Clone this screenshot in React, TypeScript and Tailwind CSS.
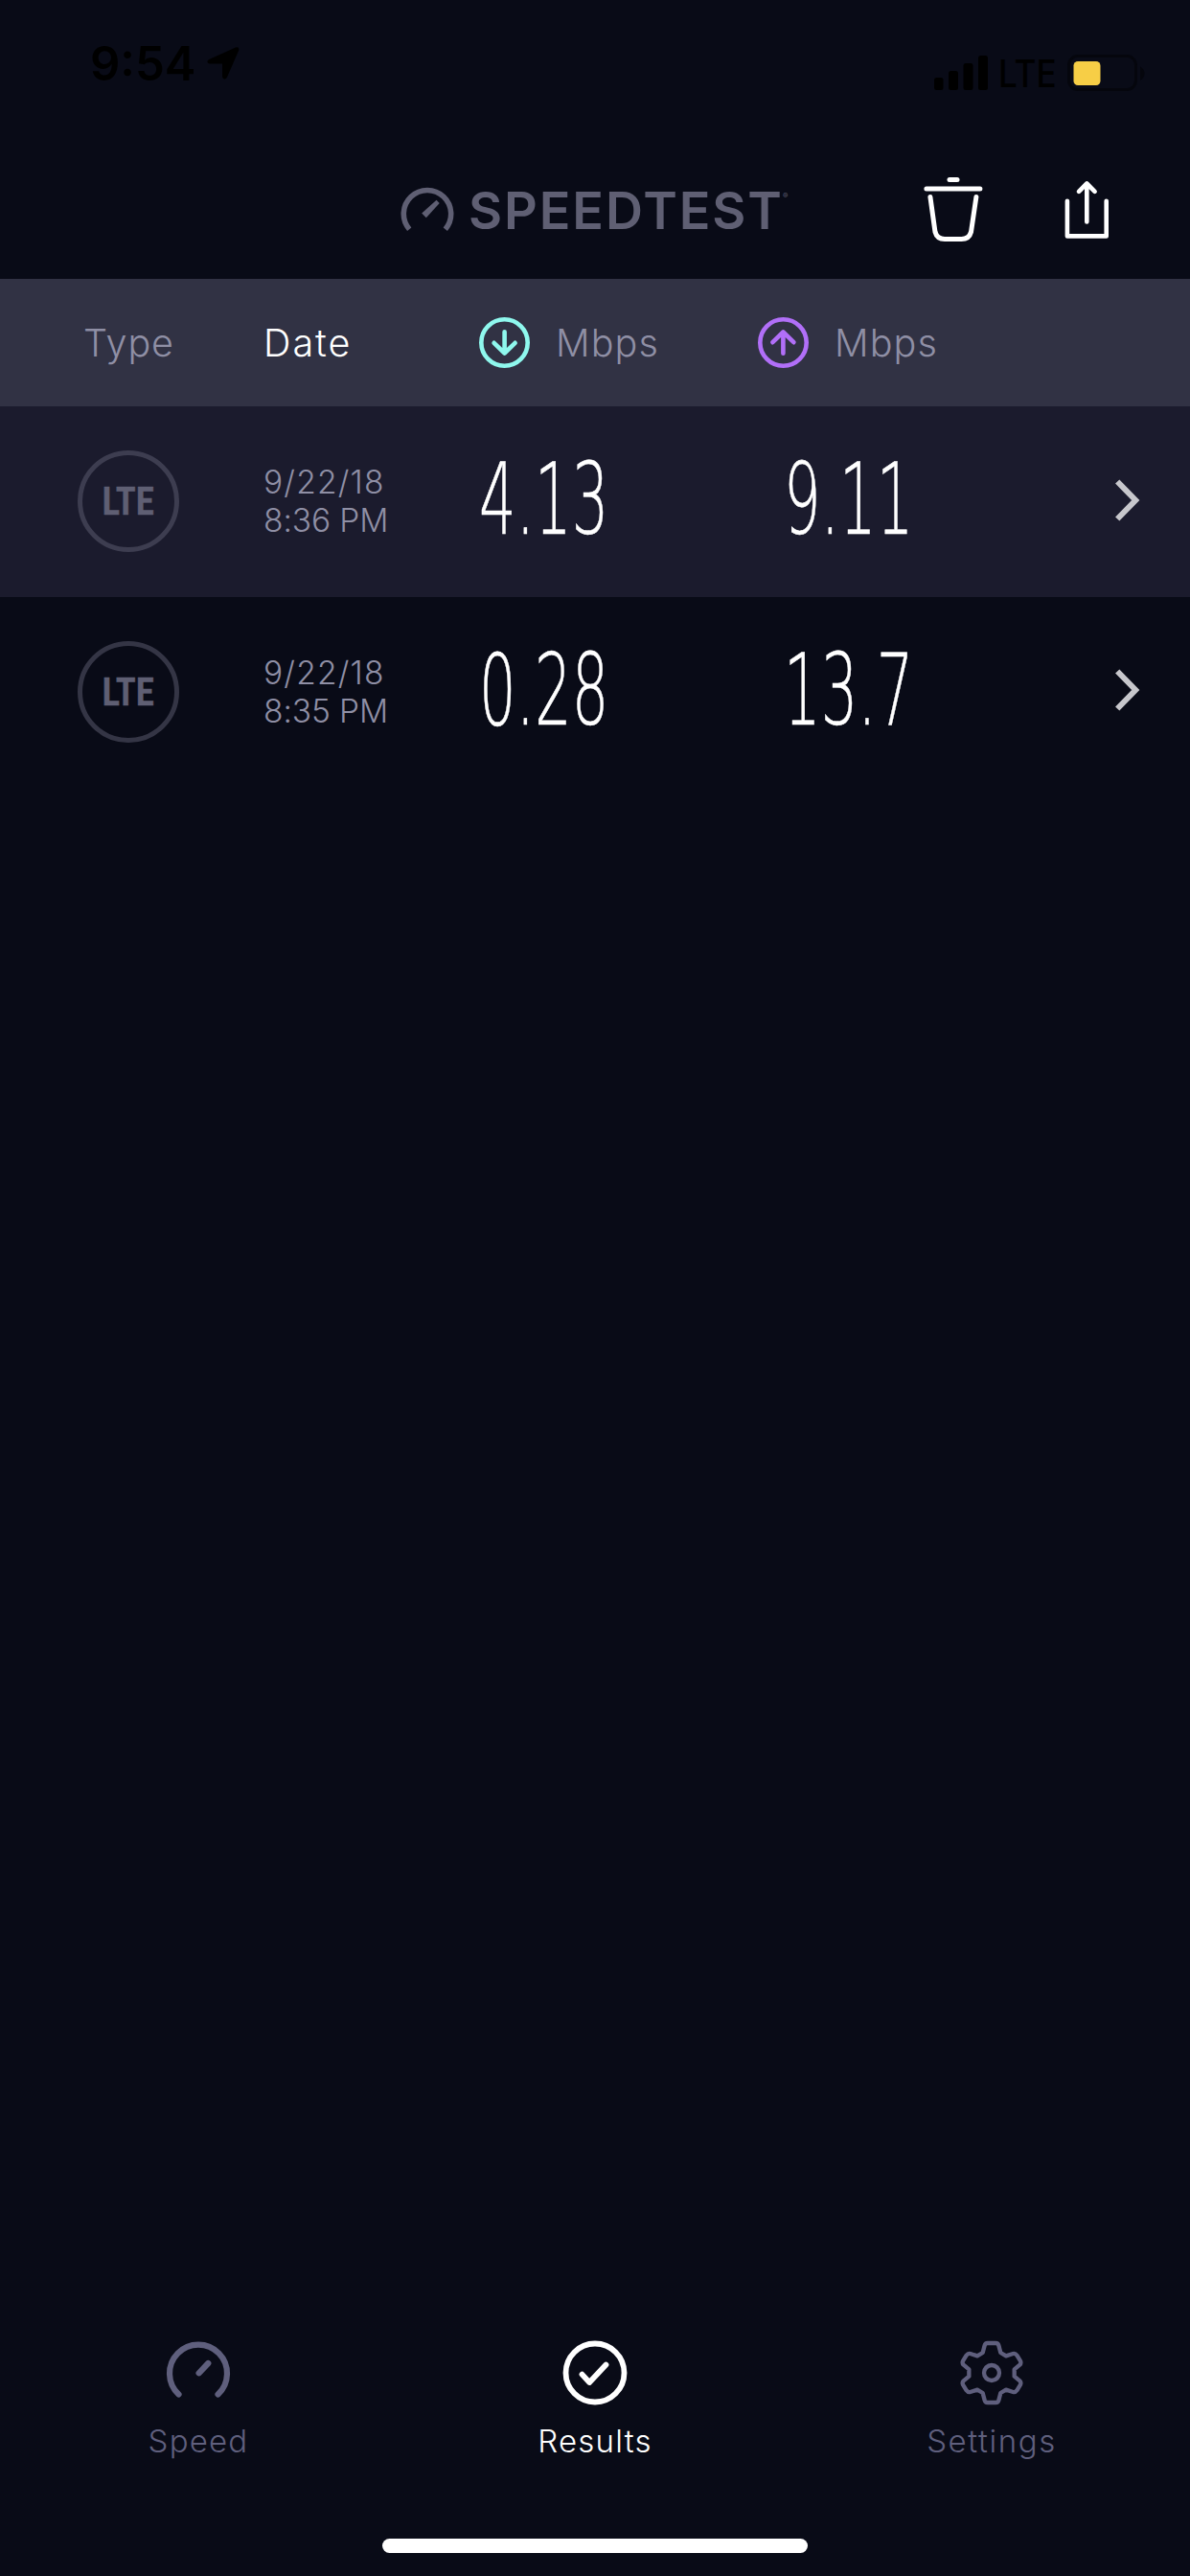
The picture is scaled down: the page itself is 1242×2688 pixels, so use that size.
import React from "react";

type Result = { date: string; time: string; down: string; up: string };

const results: Result[] = [
  { date: "9/22/18", time: "8:36 PM", down: "4.13", up: "9.11" },
  { date: "9/22/18", time: "8:35 PM", down: "0.28", up: "13.7" },
];

function StatusBar() {
  return (
    <div className="flex h-[132px] justify-between pt-[42px] pr-[46px] pl-[94px] text-black">
      <div className="flex h-[48px] items-center">
        <span className="pt-[2px] text-[49px] leading-[48px] font-semibold">9:54</span>
        <svg className="ml-[12px]" width="34" height="34" viewBox="0 0 34 34" fill="currentColor">
          <path d="M30 .6Q34-.6 33.200 3.600L21 31.500Q19.600 34 17.500 33.200 16 32.500 16 30.500V17.500H3Q.8 17.300.5 15.800.2 14 2.200 13Z" />
        </svg>
      </div>
      <div className="flex h-[68px] items-center">
        <svg width="58" height="36" viewBox="0 0 58 36" fill="currentColor">
          <rect x="0" y="23" width="9.500" height="13" rx="2.500" />
          <rect x="15" y="16" width="10" height="20" rx="2.500" />
          <rect x="30.500" y="8" width="10" height="28" rx="2.500" />
          <rect x="46" y="0" width="10" height="36" rx="2.500" />
        </svg>
        <span className="ml-[9px] w-[65px] origin-left scale-x-[.9] pt-[2px] text-[39px] leading-[64px] font-medium">LTE</span>
        <svg className="ml-[7px]" width="82" height="38" viewBox="0 0 82 38">
          <rect x="1.500" y="1.500" width="70" height="35" rx="9.500" fill="none" stroke="#05060d" strokeWidth="3" />
          <path d="M76 12.500Q80.500 15 80.500 19.500T76 27Z" fill="#05060d" />
          <rect x="6.500" y="7" width="28" height="25" rx="4.500" fill="#f7ce46" />
        </svg>
      </div>
    </div>
  );
}

function LogoGauge() {
  return (
    <svg width="56" height="48" viewBox="0 0 56 48">
      <path d="M9.200 45.200A24.700 24.700 0 1 1 46.800 45.200" fill="none" stroke="#5f5f73" strokeWidth="5.600" />
      <path d="M22.200 28.500L37.500 14.800 40.700 18 26.800 33.200Z" fill="#5f5f73" />
    </svg>
  );
}

function TitleBar() {
  return (
    <div className="flex h-[159px] items-start">
      <div className="mt-[62px] ml-[418px] flex h-[48px] items-center text-[#5f5f73]">
        <LogoGauge />
        <span className="ml-[15px] pt-[4px] text-[54px] leading-[48px] font-semibold tracking-[1.9px]">SPEEDTEST</span>
        <span className="-mt-[28px] -ml-[1px] text-[8px] leading-none">®</span>
      </div>
      <button className="mt-[53px] ml-auto" aria-label="Delete results">
        <svg width="62" height="68" viewBox="0 0 62 68" fill="none" stroke="#fff" strokeWidth="5" strokeLinecap="round">
          <path d="M27 2.600H35" />
          <path d="M2.900 12H58.900" />
          <path d="M6.900 20.500L12 57Q14 64.500 22 64.500H39.500Q47.500 64.500 49.500 57L54.900 20.500" />
        </svg>
      </button>
      <button className="mt-[56px] mr-[84px] ml-[82px]" aria-label="Share results">
        <svg width="50" height="62" viewBox="0 0 50 62" fill="none" stroke="#fff" strokeWidth="4.600" strokeLinecap="round" strokeLinejoin="round">
          <path d="M5.900 21.700V58.400H46.700V21.700" />
          <path d="M26.300 43.500V4M18 11.800L26.300 3.500 34.600 11.800" />
        </svg>
      </button>
    </div>
  );
}

function DirectionIcon({ up = false }: { up?: boolean }) {
  return (
    <svg className={up ? "rotate-180 text-[#b16ff8]" : "text-[#8ff8ee]"} width="53" height="53" viewBox="0 0 53 53" fill="none" stroke="currentColor" strokeWidth="4.600" strokeLinecap="round" strokeLinejoin="round">
      <circle cx="26.500" cy="26.500" r="24.200" />
      <path d="M26.600 15.300V37.500M15.600 26.800L26.600 37.500 37.600 26.800" />
    </svg>
  );
}

function TableHeader() {
  return (
    <div className="grid h-[133px] grid-cols-[276px_224px_291px_1fr] items-center bg-[#313244] text-[39.5px] leading-[48px] font-[330] text-[#8f8fa5]">
      <span className="pl-[87px] tracking-[0.9px]">Type</span>
      <span className="-ml-[1px] tracking-[2px] text-white">Date</span>
      <div className="flex items-center gap-[27px]">
        <DirectionIcon />
        <span className="tracking-[1.1px]">Mbps</span>
      </div>
      <div className="flex items-center gap-[27px]">
        <DirectionIcon up />
        <span className="tracking-[1.1px]">Mbps</span>
      </div>
    </div>
  );
}

function Speed({ value }: { value: string }) {
  return (
    <span className="-mt-[4px] block w-[230px] origin-left scale-x-[.59] font-['DejaVu_Sans',sans-serif] text-[103px] leading-[120px] font-extralight text-white [-webkit-text-stroke:0.6px_white]">
      {value}
    </span>
  );
}

function ResultRow({ result }: { result: Result }) {
  return (
    <div className="grid h-[198.5px] grid-cols-[276px_224px_318px_1fr] items-center odd:bg-[#1b1b2d]">
      <div className="ml-[81px] flex size-[106px] items-center justify-center rounded-full border-[5px] border-[#5f5f73]/50">
        <span className="scale-x-[.95] font-[Roboto,sans-serif] text-[41px] leading-[48px] font-semibold text-[#5f5f73] [font-stretch:75%] [-webkit-text-stroke:0.5px_#5f5f73]">LTE</span>
      </div>
      <div className="-ml-[1px] flex flex-col text-[33.5px] leading-[40px] font-[330] text-[#8f8fa5]">
        <span className="tracking-[1.2px]">{result.date}</span>
        <span className="-tracking-[0.1px]">{result.time}</span>
      </div>
      <Speed value={result.down} />
      <div className="flex items-center">
        <Speed value={result.up} />
        <svg className="mr-[49px] mb-[3px] ml-auto" width="30" height="46" viewBox="0 0 30 46" fill="none" stroke="#c7c7cc" strokeWidth="6">
          <path d="M3.200 3.500L22.200 23 3.200 42.500" />
        </svg>
      </div>
    </div>
  );
}

function TabBar() {
  return (
    <nav className="grid h-[207px] grid-cols-3 text-[33px] leading-[40px] font-[330] text-[#5f5f7d]">
      <div className="flex flex-col items-center">
        <svg width="68" height="68" viewBox="0 0 68 68" fill="none" stroke="currentColor" strokeWidth="6.200" strokeLinecap="round">
          <path d="M13.500 56.500A30 30 0 1 1 54.500 56.500M34.600 34.300L44.300 24" />
        </svg>
        <span className="mt-[17px] tracking-[1.2px]">Speed</span>
      </div>
      <div className="flex flex-col items-center text-white">
        <svg width="68" height="68" viewBox="0 0 68 68" fill="none" stroke="currentColor" strokeWidth="5.800" strokeLinecap="round" strokeLinejoin="round">
          <circle cx="34" cy="34" r="30.500" />
          <path d="M20.500 35.600L28.200 44 45.500 25.500" />
        </svg>
        <span className="mt-[17px] tracking-[1.2px]">Results</span>
      </div>
      <div className="flex flex-col items-center">
        <svg width="68" height="68" viewBox="-102 -102 204 204" fill="none" stroke="currentColor" strokeWidth="13" strokeLinejoin="round">
          <circle r="24" />
          <path d="M-13-93H13Q20-93 22-86L28-63 45-53 67-60Q74-62 79-55L90-37Q93-30 88-25L71-11V11L88 25Q93 30 90 37L79 55Q74 62 67 60L45 53 28 63 22 86Q20 93 13 93H-13Q-20 93-22 86L-28 63-45 53-67 60Q-74 62-79 55L-90 37Q-93 30-88 25L-71 11V-11L-88-25Q-93-30-90-37L-79-55Q-74-62-67-60L-45-53-28-63-22-86Q-20-93-13-93Z" />
        </svg>
        <span className="mt-[17px] tracking-[1.6px]">Settings</span>
      </div>
    </nav>
  );
}

export default function App() {
  return (
    <main className="flex h-[2688px] w-[1242px] flex-col overflow-hidden bg-[#090b17] font-[Inter,sans-serif]">
      <StatusBar />
      <TitleBar />
      <TableHeader />
      <section>
        {results.map((result) => (
          <ResultRow key={result.time} result={result} />
        ))}
      </section>
      <div className="mt-auto">
        <TabBar />
        <div className="mx-auto mb-[24px] h-[15px] w-[444px] rounded-full bg-white" />
      </div>
    </main>
  );
}
